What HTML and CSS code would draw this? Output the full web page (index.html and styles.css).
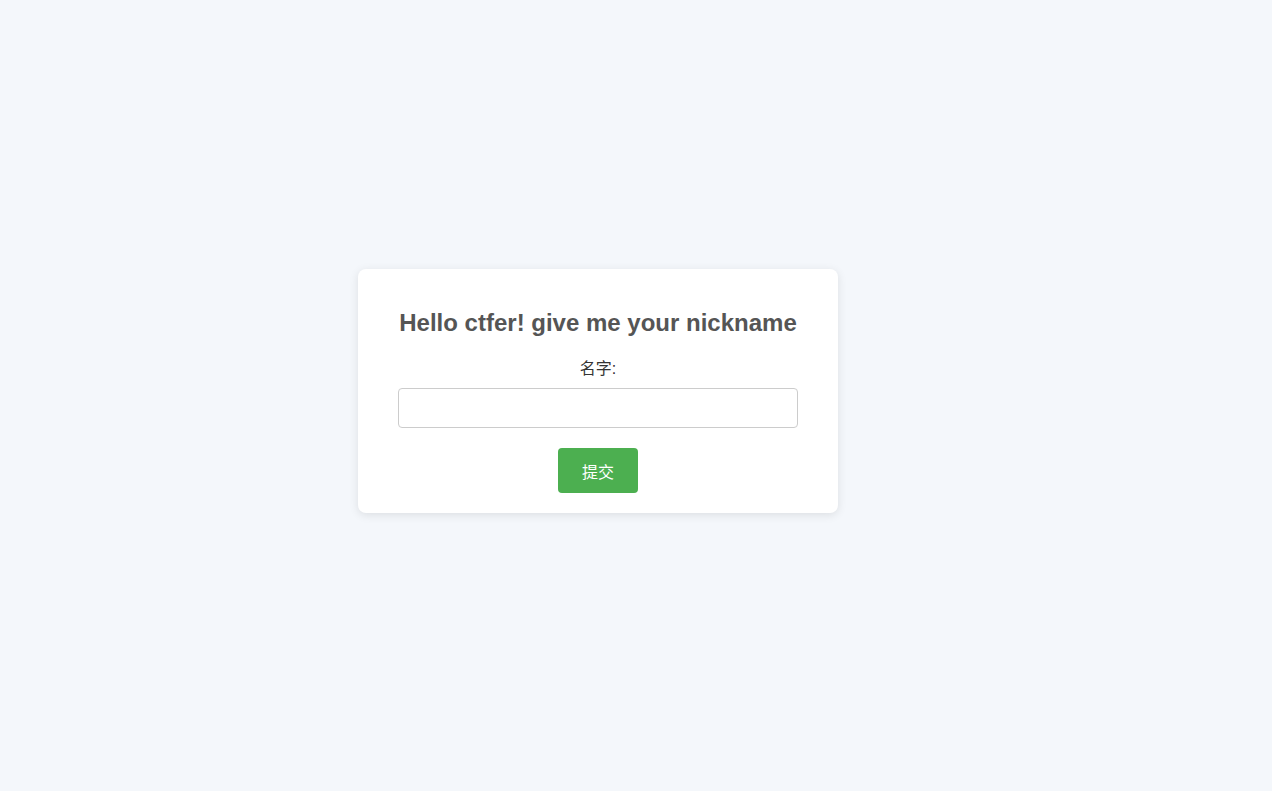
FILE: index.html
```html
<!DOCTYPE html>
<html lang="zh">
<head>
<meta charset="utf-8">
<title>Hello ctfer</title>
<link rel="stylesheet" href="styles.css">
</head>
<body>
<div class="card">
  <h2 class="title">Hello ctfer! give me your nickname</h2>
  <form class="form">
    <label class="label" for="name">名字:</label>
    <input class="input" id="name" type="text">
    <button class="btn" type="submit">提交</button>
  </form>
</div>
</body>
</html>
```
FILE: styles.css
```css
html, body {
  margin: 0;
  padding: 0;
}
body {
  background: #f4f7fb;
  font-family: "Liberation Sans", Arial, "Noto Sans CJK SC", sans-serif;
  height: 100vh;
  box-sizing: border-box;
  padding-bottom: 9px;
  padding-right: 76px;
  display: flex;
  align-items: center;
  justify-content: center;
}
.card {
  width: 480px;
  box-sizing: border-box;
  background: #fff;
  border-radius: 8px;
  box-shadow: 0 2px 10px rgba(0, 0, 0, 0.1);
  padding: 40px 40px 20px;
  text-align: center;
}
.title {
  margin: 0 0 22px;
  font-size: 24px;
  line-height: 28px;
  font-weight: bold;
  color: #555;
}
.form {
  display: flex;
  flex-direction: column;
  align-items: center;
}
.label {
  font-size: 16px;
  line-height: 19px;
  color: #333;
  margin-bottom: 10px;
}
.input {
  width: 400px;
  height: 40px;
  box-sizing: border-box;
  border: 1px solid #ccc;
  border-radius: 4px;
  padding: 8px;
  font-size: 14px;
  margin: 0 0 20px;
  background: #fff;
}
.btn {
  width: 80px;
  height: 45px;
  background: #4caf50;
  color: #fff;
  border: none;
  border-radius: 4px;
  font-size: 16px;
  font-family: inherit;
  padding: 0;
  cursor: pointer;
}
```
